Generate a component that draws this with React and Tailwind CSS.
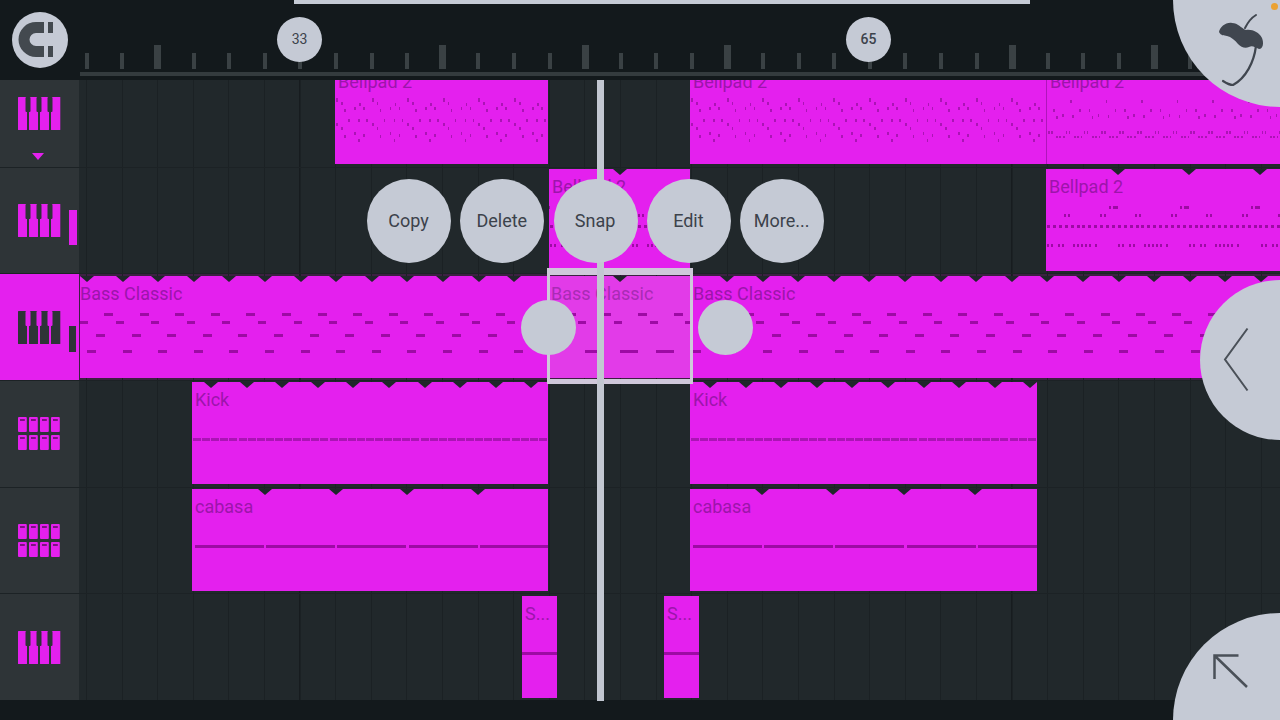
import React from 'react';

const PITCH = 35.6;
const ROW_H = 106.67;
const NOTE = '#9d0ba4';
const DOT = '#ab14b5';

const range = (n) => Array.from({ length: n }, (_, i) => i);

// bellpad dots, one beat of the pattern (x is measured on screen)
const bellDots = (x0) => [
  { x: x0 + 1, y: 98, w: 2, h: 4, p: PITCH },
  { x: x0 + 6, y: 102, w: 1.5, h: 3, p: PITCH },
  { x: x0 + 9, y: 109, w: 1.5, h: 3, p: PITCH },
  { x: x0 + 19, y: 107, w: 1.5, h: 3, p: PITCH },
  { x: x0 + 24, y: 103, w: 1.5, h: 3, p: PITCH },
  { x: x0 + 28, y: 107, w: 1.5, h: 3, p: PITCH },
  { x: x0 + 13, y: 119, w: 1.5, h: 3, p: PITCH },
  { x: x0 + 23, y: 119, w: 1.5, h: 3, p: PITCH },
  { x: x0 + 31, y: 119, w: 1.5, h: 3, p: PITCH },
  { x: x0 + 1, y: 123, w: 2, h: 3, p: PITCH },
  { x: x0 + 6, y: 127, w: 1.5, h: 3, p: PITCH },
  { x: x0 + 9, y: 135, w: 1.5, h: 3, p: PITCH },
  { x: x0 + 19, y: 132, w: 1.5, h: 3, p: PITCH },
  { x: x0 + 23, y: 139, w: 1.5, h: 3, p: PITCH },
  { x: x0 + 28, y: 134, w: 1.5, h: 3, p: PITCH },
];

const bellTail = [
  { x: 1069, y: 100, w: 1.5, h: 3, p: PITCH },
  { x: 1052, y: 109, w: 1.5, h: 3, p: PITCH },
  { x: 1055, y: 116, w: 1.5, h: 3, p: PITCH },
  { x: 1061, y: 114, w: 1.5, h: 3, p: PITCH },
  { x: 1071, y: 115, w: 1.5, h: 3, p: PITCH },
  { x: 1078, y: 109, w: 1.5, h: 3, p: PITCH },
  { x: 1047, y: 131, w: 1.5, h: 3, p: 17.8 },
  { x: 1050, y: 131, w: 1.5, h: 3, p: 17.8 },
  { x: 1055, y: 136, w: 2, h: 2, p: 17.8 },
  { x: 1058, y: 136, w: 2, h: 2, p: 17.8 },
  { x: 1062, y: 136, w: 1.5, h: 2, p: 17.8 },
];

const bellRow2 = [
  { x: 1109, y: 206, w: 2, h: 3, p: 71.2 },
  { x: 1113, y: 206, w: 5, h: 3, p: 71.2 },
  { x: 1064, y: 214, w: 2, h: 3, p: 71.2 },
  { x: 1068, y: 214, w: 2, h: 3, p: 71.2 },
  { x: 1100, y: 214, w: 2, h: 3, p: 71.2 },
  { x: 1104, y: 214, w: 2, h: 3, p: 71.2 },
  { x: 1047, y: 225, w: 3, h: 3, p: 5.9 },
  { x: 1047, y: 244, w: 2, h: 3, p: 71.2 },
  { x: 1051, y: 244, w: 2, h: 3, p: 71.2 },
  { x: 1058, y: 244, w: 2, h: 3, p: 71.2 },
  { x: 1062, y: 244, w: 2, h: 3, p: 71.2 },
  { x: 1073, y: 244, w: 2, h: 3, p: 71.2 },
  { x: 1077, y: 244, w: 2, h: 3, p: 71.2 },
  { x: 1081, y: 244, w: 2, h: 3, p: 71.2 },
  { x: 1085, y: 244, w: 2, h: 3, p: 71.2 },
  { x: 1089, y: 244, w: 2, h: 3, p: 71.2 },
  { x: 1095, y: 244, w: 2, h: 3, p: 71.2 },
];

const bass = [
  { x: 104, y: 313, w: 9, h: 3, p: PITCH },
  { x: 80, y: 321, w: 8, h: 3, p: PITCH },
  { x: 96, y: 334, w: 9, h: 3, p: PITCH },
  { x: 87, y: 350, w: 9, h: 3, p: PITCH },
];

const bassSelected = [
  { x: 104, y: 313, w: 9, h: 3, p: PITCH },
  { x: 80, y: 321, w: 8, h: 3, p: PITCH },
  { x: 585, y: 350, w: 12, h: 3, p: 400 },
  { x: 620, y: 350, w: 18, h: 3, p: PITCH },
];

const ROWS = [
  {
    icon: 'keys',
    arrow: true,
    clips: [
      { x: 335, end: 548, label: 'Bellpad 2', low: true, notes: bellDots(335), dots: true },
      { x: 690, end: 1046, label: 'Bellpad 2', low: true, notes: bellDots(690), dots: true },
      { x: 1046, end: 1280, label: 'Bellpad 2', low: true, notes: bellTail, dots: true, edge: true },
    ],
  },
  {
    icon: 'keys',
    level: true,
    clips: [
      { x: 549, end: 690, label: 'Bellpad 2', notes: bellRow2.map((n) => ({ ...n, x: n.x - 568 })), marks: [620] },
      {
        x: 1046,
        end: 1280,
        label: 'Bellpad 2',
        notes: bellRow2,
        marks: [1118, 1189, 1260],
      },
    ],
  },
  {
    icon: 'keys',
    active: true,
    clips: [
      { x: 80, end: 548, label: 'Bass Classic', flush: true, notes: bass, marks: range(13).map((i) => 87 + i * PITCH) },
      { x: 548, end: 690, label: 'Bass Classic', notes: bassSelected, marks: [620], selected: true },
      { x: 690, end: 1280, label: 'Bass Classic', notes: bass, marks: range(17).map((i) => 727 + i * PITCH) },
    ],
  },
  {
    icon: 'pads',
    clips: [
      { x: 192, end: 548, label: 'Kick', notes: [{ x: 193, y: 438, w: 8, h: 3, p: 9.1 }], dots: true, marks: range(10).map((i) => 211 + i * PITCH) },
      { x: 690, end: 1037, label: 'Kick', notes: [{ x: 691, y: 438, w: 8, h: 3, p: 9.1 }], dots: true, marks: range(10).map((i) => 710 + i * PITCH) },
    ],
  },
  {
    icon: 'pads',
    clips: [
      { x: 192, end: 548, label: 'cabasa', notes: [{ x: 195, y: 545, w: 69, h: 3, p: 71.2 }], marks: [265, 336, 407, 478] },
      { x: 690, end: 1037, label: 'cabasa', notes: [{ x: 693, y: 545, w: 69, h: 3, p: 71.2 }], marks: [762, 833, 904, 975] },
    ],
  },
  {
    icon: 'keys',
    clips: [
      { x: 522, end: 557, label: 'S...', notes: [{ x: 522, y: 652, w: 36, h: 3, p: 100 }] },
      { x: 664, end: 699, label: 'S...', notes: [{ x: 664, y: 652, w: 36, h: 3, p: 100 }] },
    ],
  },
];

const KeysIcon = ({ fill, cut }) => (
  <svg width="43" height="33" viewBox="0 0 43 33" className="shrink-0">
    <rect x="0" y="0" width="9" height="33" rx="0.5" fill={fill} />
    <rect x="11" y="0" width="9" height="33" rx="0.5" fill={fill} />
    <rect x="22" y="0" width="9" height="33" rx="0.5" fill={fill} />
    <rect x="33" y="0" width="9.3" height="33" rx="0.5" fill={fill} />
    <rect x="9" y="0" width="2" height="15" fill={fill} />
    <rect x="20" y="0" width="2" height="15" fill={fill} />
    <rect x="31" y="0" width="2" height="15" fill={fill} />
    <rect x="7.5" y="0" width="5" height="15" rx="1" fill={cut} />
    <rect x="18.5" y="0" width="5" height="15" rx="1" fill={cut} />
    <rect x="29.5" y="0" width="5" height="15" rx="1" fill={cut} />
  </svg>
);

const PadsIcon = () => (
  <svg width="43" height="33" viewBox="0 0 43 33" className="shrink-0">
    {[0, 18].map((y) =>
      [0, 11, 22, 33].map((x) => (
        <g key={`${x}-${y}`}>
          <rect x={x} y={y} width="8.8" height="15" rx="1" fill="#e420ee" />
          <rect x={x + 2} y={y + 2} width="4.8" height="2" fill="#7a1280" />
        </g>
      )),
    )}
  </svg>
);

const Sidebar = ({ row }) => (
  <div
    className={`relative w-[79px] shrink-0 flex items-center gap-[8px] pl-[18px] ${
      row.active ? 'bg-[#e420ee]' : 'bg-[#2e3437]'
    }`}
  >
    {row.icon === 'pads' ? (
      <PadsIcon />
    ) : row.active ? (
      <KeysIcon fill="#2e3437" cut="#e420ee" />
    ) : (
      <KeysIcon fill="#e420ee" cut="#2e3437" />
    )}
    {row.arrow && (
      <div className="absolute left-[32px] bottom-[7px] w-0 h-0 border-l-[6.5px] border-r-[6.5px] border-t-[7px] border-l-transparent border-r-transparent border-t-[#e420ee]" />
    )}
    {row.level && <div className="mt-[15px] w-[8px] h-[35px] bg-[#e420ee]" />}
    {row.active && <div className="mt-[24px] w-[7px] h-[26px] bg-[#2e3437]" />}
  </div>
);

const Clip = ({ clip, rowTop }) => {
  const top = rowTop + 2.3;
  return (
    <div
      className={`absolute top-[1.3px] bottom-[2.3px] overflow-hidden ${
        clip.selected ? 'bg-[#e23be8]' : 'bg-[#e420ee]'
      } ${clip.edge ? 'border-l border-[#b015bb]' : ''}`}
      style={{ left: clip.x - 79, width: clip.end - clip.x }}
    >
      <div
        className={`absolute text-[18px] leading-[21px] whitespace-nowrap ${clip.low ? 'top-[9px]' : 'top-[7px]'} ${
          clip.flush ? 'left-0' : 'left-[3px]'
        } ${clip.selected ? 'text-[#a92bb5]' : 'text-[#9c15ab]'}`}
      >
        {clip.label}
      </div>
      {(clip.notes || []).map((n, i) => {
        const count = Math.ceil(1300 / n.p);
        return range(count).map((k) => {
          const left = n.x + k * n.p - clip.x;
          if (left + n.w < 0 || left > clip.end - clip.x) return null;
          return (
            <span
              key={`${i}-${k}`}
              className="absolute"
              style={{ left, top: n.y - top, width: n.w, height: n.h, background: clip.dots ? DOT : NOTE }}
            />
          );
        });
      })}
      {(clip.marks || []).map((m) => (
        <span
          key={m}
          className="absolute top-0 w-0 h-0 border-l-[7px] border-r-[7px] border-t-[6px] border-l-transparent border-r-transparent border-t-[#1f262a]"
          style={{ left: m - clip.x - 7 }}
        />
      ))}
    </div>
  );
};

const Track = ({ row, rowTop }) => (
  <div className={`relative flex-1 overflow-hidden ${row.active ? 'bg-[#3c2042]' : 'bg-[#21282b]'}`}>
    <div className="absolute inset-y-0 left-[7px] right-0 bg-[repeating-linear-gradient(90deg,#1b2124_0,#1b2124_1px,transparent_1px,transparent_35.6px),repeating-linear-gradient(90deg,transparent_0,transparent_71px,#171c1f_71px,#171c1f_72px,transparent_72px,transparent_142.4px)]" />
    {row.clips.map((clip) => (
      <Clip key={clip.x} clip={clip} rowTop={rowTop} />
    ))}
  </div>
);

const Circle = ({ children, className }) => (
  <div className={`rounded-full bg-[#c5cad5] text-[#3c424b] flex items-center justify-center ${className}`}>
    {children}
  </div>
);

export default function App() {
  return (
    <div className="relative w-[1280px] h-[720px] overflow-hidden bg-[#13191c] font-[Roboto,sans-serif]">
      {/* ruler */}
      <div className="flex h-[80px]">
        <div className="w-[69px] shrink-0 pl-[12px] pt-[12px]">
          <Circle className="w-[56px] h-[56px]">
            <svg width="56" height="56" viewBox="12 12 56 56">
              <path d="M44 22 H36 A17.5 17.5 0 0 0 36 57 H44 V46 H36 A6.5 6.5 0 0 1 36 33 H44 Z" fill="#43494f" />
              <rect x="48" y="22" width="5" height="11" fill="#43494f" />
              <rect x="48" y="46" width="5" height="11" fill="#43494f" />
            </svg>
          </Circle>
        </div>
        <div className="flex-1 min-w-0">
          <div className="flex items-end h-[69px]">
            {range(34).map((i) => (
              <div key={i} className="w-[35.6px] shrink-0 flex justify-center">
                {(i - 2) % 4 === 0 && i !== 6 && i !== 22 ? (
                  <div className="w-[7px] h-[24px] bg-[#3a4144]" />
                ) : (
                  <div className="w-[4px] h-[16px] bg-[#3a4144]" />
                )}
              </div>
            ))}
          </div>
          <div className="ml-[11px] mt-[3px] h-[4px] bg-[#343b3e]" />
        </div>
      </div>

      {/* tracks, the top one is scrolled partly out of view */}
      <div className="h-[620px] overflow-hidden">
        <div className="-mt-[20px]">
          {ROWS.map((row, i) => (
            <div key={i} className="flex h-[106.67px] border-t border-[#1c2225]">
              <Sidebar row={row} />
              <Track row={row} rowTop={60 + i * ROW_H} />
            </div>
          ))}
        </div>
      </div>

      {/* scroll bar */}
      <div className="absolute left-[294px] top-0 w-[736px] h-[4px] bg-[#c5cad5]" />

      {/* selected clip frame */}
      <div className="absolute left-[547px] top-[268px] w-[146px] h-[116px] border-x-[3px] border-t-[7px] border-b-[5px] border-[#cfc8da]" />

      {/* playhead */}
      <div className="absolute left-[597px] top-[80px] w-[7px] h-[621px] bg-[#c2c7d1]" />

      {/* ruler bubbles */}
      <Circle className="absolute left-[277px] top-[17px] w-[45px] h-[45px] text-[14px]">33</Circle>
      <Circle className="absolute left-[846px] top-[17px] w-[45px] h-[45px] text-[14px] font-medium">65</Circle>

      {/* context menu */}
      <div className="absolute left-[367px] top-[179px] flex gap-[9.3px] text-[18px]">
        {['Copy', 'Delete', 'Snap', 'Edit', 'More...'].map((label) => (
          <Circle key={label} className="w-[84px] h-[84px] pb-[2px] pr-[1px]">
            {label}
          </Circle>
        ))}
      </div>

      {/* resize handles */}
      <Circle className="absolute left-[521px] top-[300px] w-[55px] h-[55px]" />
      <Circle className="absolute left-[698px] top-[300px] w-[55px] h-[55px]" />

      {/* fruit button */}
      <Circle className="absolute left-[1173px] -top-[107px] w-[214px] h-[214px]" />
      <div className="absolute left-[1271px] top-[3px] w-[7px] h-[7px] rounded-full bg-[#eba233]" />
      <svg className="absolute left-[1215px] top-[10px]" width="60" height="80" viewBox="1215 10 60 80">
        <path
          d="M1219 32 C1220 27 1226 22 1232 23 C1238 23 1241 28 1246 30 C1252 29 1259 32 1262 38 C1264 43 1263 49 1259 49 C1255 47 1252 45 1249 47 C1245 49 1241 47 1238 44 C1235 40 1231 37 1227 36 C1224 35 1221 36 1219 32 Z"
          fill="#40464f"
        />
        <path d="M1245 28 C1248 22 1251 18 1256 15" fill="none" stroke="#40464f" strokeWidth="2" strokeLinecap="round" />
        <path d="M1256 46 C1254 62 1246 78 1233 85 C1229 85 1226 83 1223 81" fill="none" stroke="#40464f" strokeWidth="2.2" strokeLinecap="round" />
      </svg>

      {/* collapse button */}
      <Circle className="absolute left-[1200px] top-[280px] w-[160px] h-[160px]" />
      <svg className="absolute left-[1220px] top-[322px]" width="34" height="74" viewBox="1220 322 34 74">
        <path d="M1247.5 328.5 L1225 359.5 L1247.5 390.5" fill="none" stroke="#4a5058" strokeWidth="2" />
      </svg>

      {/* back to top button */}
      <Circle className="absolute left-[1173px] top-[613px] w-[214px] h-[214px]" />
      <svg className="absolute left-[1210px] top-[650px]" width="42" height="42" viewBox="1210 650 42 42">
        <path d="M1214.5 679 V655.5 H1238.5 M1214.5 655.5 L1247 687" fill="none" stroke="#4a5058" strokeWidth="2.5" />
      </svg>
    </div>
  );
}
